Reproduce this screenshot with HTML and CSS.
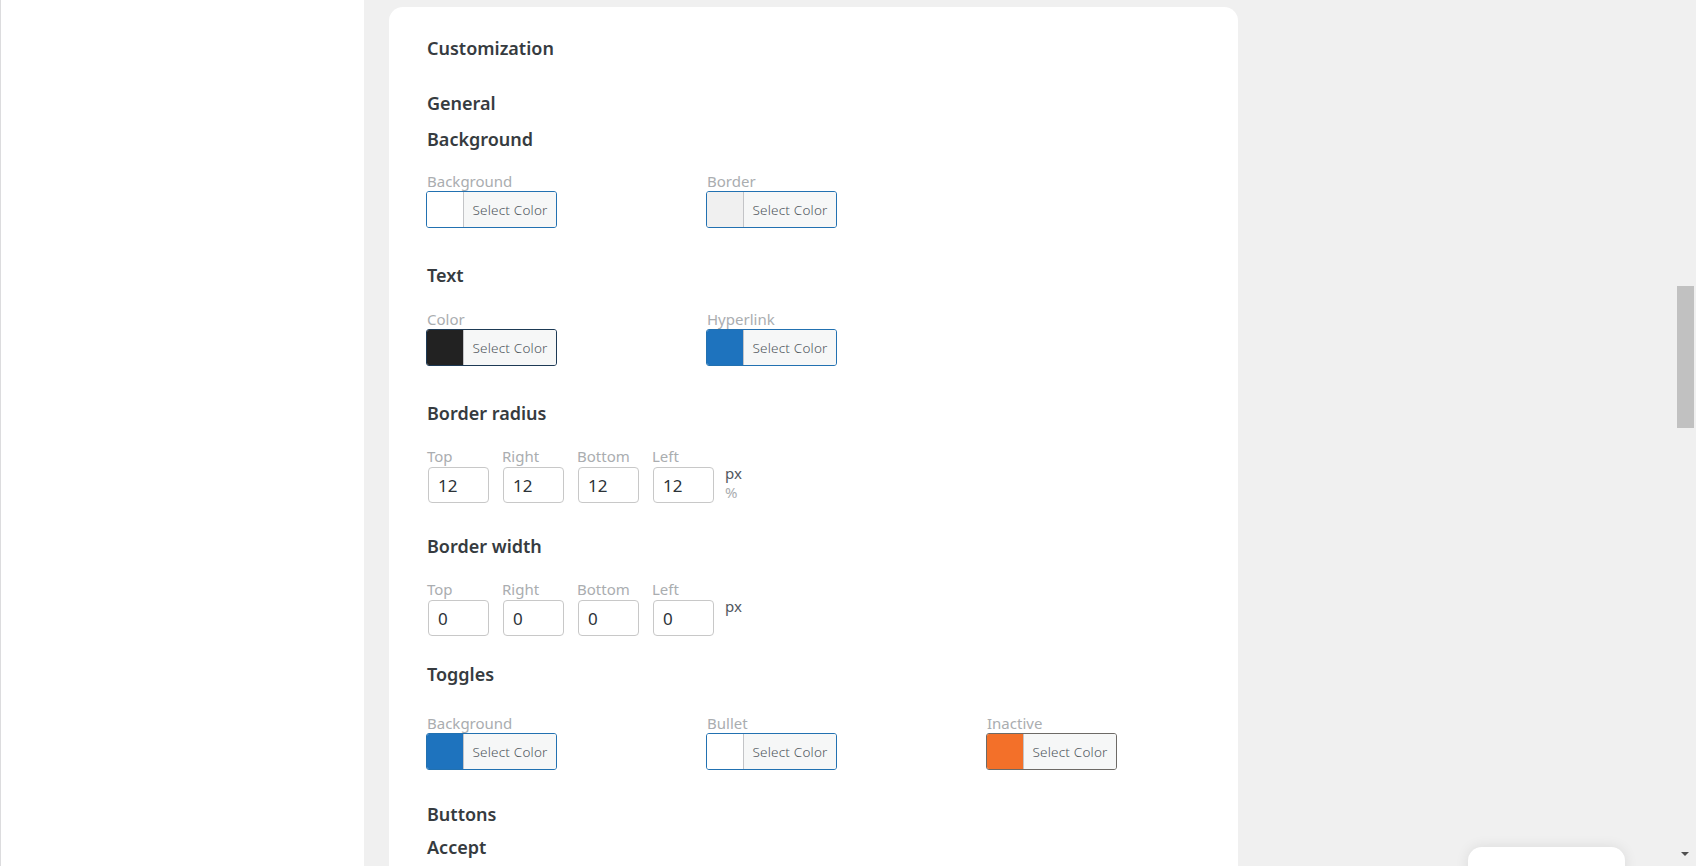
FILE: index.html
```html
<!DOCTYPE html>
<html lang="en">
<head>
<meta charset="utf-8">
<title>Customization</title>
<link rel="stylesheet" href="styles.css">
</head>
<body>
<div class="app">
  <aside class="sidebar"></aside>
  <main class="main">
    <section class="card">
      <h2 class="title">Customization</h2>

      <h3 class="heading heading--general">General</h3>
      <h4 class="heading heading--bg">Background</h4>
      <div class="picker-row picker-row--first">
        <div class="field">
          <span class="lbl">Background</span>
          <button class="picker"><span class="swatch swatch--white"></span><span class="pick-text">Select Color</span></button>
        </div>
        <div class="field">
          <span class="lbl">Border</span>
          <button class="picker"><span class="swatch swatch--light"></span><span class="pick-text">Select Color</span></button>
        </div>
      </div>

      <h4 class="heading heading--after-picker">Text</h4>
      <div class="picker-row">
        <div class="field">
          <span class="lbl">Color</span>
          <button class="picker picker--dark"><span class="swatch swatch--dark"></span><span class="pick-text">Select Color</span></button>
        </div>
        <div class="field">
          <span class="lbl">Hyperlink</span>
          <button class="picker"><span class="swatch swatch--blue"></span><span class="pick-text">Select Color</span></button>
        </div>
      </div>

      <h4 class="heading heading--after-picker">Border radius</h4>
      <div class="sides-row">
        <div class="side"><span class="lbl">Top</span><input class="num" type="text" value="12"></div>
        <div class="side"><span class="lbl">Right</span><input class="num" type="text" value="12"></div>
        <div class="side"><span class="lbl">Bottom</span><input class="num" type="text" value="12"></div>
        <div class="side"><span class="lbl">Left</span><input class="num" type="text" value="12"></div>
        <div class="units"><span class="unit unit--on">px</span><span class="unit">%</span></div>
      </div>

      <h4 class="heading heading--after-radius">Border width</h4>
      <div class="sides-row sides-row--width">
        <div class="side"><span class="lbl">Top</span><input class="num" type="text" value="0"></div>
        <div class="side"><span class="lbl">Right</span><input class="num" type="text" value="0"></div>
        <div class="side"><span class="lbl">Bottom</span><input class="num" type="text" value="0"></div>
        <div class="side"><span class="lbl">Left</span><input class="num" type="text" value="0"></div>
        <div class="units"><span class="unit unit--on">px</span></div>
      </div>

      <h4 class="heading heading--toggles">Toggles</h4>
      <div class="picker-row picker-row--toggles">
        <div class="field">
          <span class="lbl">Background</span>
          <button class="picker"><span class="swatch swatch--blue"></span><span class="pick-text">Select Color</span></button>
        </div>
        <div class="field">
          <span class="lbl">Bullet</span>
          <button class="picker"><span class="swatch swatch--white"></span><span class="pick-text">Select Color</span></button>
        </div>
        <div class="field">
          <span class="lbl">Inactive</span>
          <button class="picker picker--gray"><span class="swatch swatch--orange"></span><span class="pick-text">Select Color</span></button>
        </div>
      </div>

      <h3 class="heading heading--buttons">Buttons</h3>
      <h4 class="heading heading--accept">Accept</h4>
    </section>
  </main>
  <div class="scrollbar">
    <div class="thumb"></div>
    <div class="arrow-down"></div>
  </div>
</div>
<div class="float-box"></div>
</body>
</html>
```

FILE: styles.css
```css
* { box-sizing: border-box; }

html, body {
  margin: 0;
  padding: 0;
  height: 866px;
  overflow: hidden;
  background: #f0f0f0;
  font-family: "Noto Sans", "Open Sans", "Liberation Sans", sans-serif;
}

.app {
  display: grid;
  grid-template-columns: 364px 1fr 19px;
  height: 866px;
}

.sidebar {
  background: #ffffff;
  border-left: 1px solid #dcdcde;
}

.main {
  background: #f0f0f0;
  padding: 7px 0 0 25px;
  overflow: hidden;
}

.card {
  width: 849px;
  min-height: 900px;
  background: #ffffff;
  border-radius: 14px 14px 0 0;
  padding: 29px 0 0 38px;
}

.title,
.heading {
  margin: 0;
  font-size: 18px;
  line-height: 24px;
  font-weight: 600;
  color: #363b40;
}

.heading--general { margin-top: 31px; }
.heading--bg { margin-top: 12px; }
.heading--after-picker { margin-top: 35px; }
.heading--after-radius { margin-top: 31px; }
.heading--toggles { margin-top: 26px; }
.heading--buttons { margin-top: 32px; }
.heading--accept { margin-top: 9px; }

.lbl {
  display: block;
  font-size: 15px;
  line-height: 20px;
  color: #aaadb0;
}

.picker-row {
  display: grid;
  grid-template-columns: repeat(3, 280px);
  margin-top: 22px;
  margin-left: -1px;
}
.picker-row--first { margin-top: 20px; }
.picker-row--toggles { margin-top: 27px; }

.field .lbl { padding-left: 1px; }

.picker {
  display: flex;
  width: 131px;
  height: 37px;
  padding: 0;
  border: 1px solid #2271b1;
  border-radius: 3px;
  overflow: hidden;
  background: #f6f7f7;
  cursor: pointer;
  font-family: inherit;
}
.picker--dark { border-color: #1d3a55; }
.picker--gray { border-color: #6d6a66; }

.swatch {
  width: 37px;
  height: 100%;
  border-right: 1px solid #c3c4c7;
}
.swatch--white { background: #ffffff; }
.swatch--light { background: #f0f0f0; }
.swatch--dark { background: #222222; }
.swatch--blue { background: #1e73be; }
.swatch--orange { background: #f37029; }

.pick-text {
  flex: 1;
  display: flex;
  align-items: center;
  justify-content: center;
  font-size: 13.5px;
  font-weight: 300;
  letter-spacing: 0.2px;
  color: #50575e;
  background: #f6f7f7;
}

.sides-row {
  display: flex;
  gap: 14px;
  margin-top: 21px;
}

.side {
  display: flex;
  flex-direction: column;
  width: 61px;
}

.num {
  width: 61px;
  height: 36px;
  margin: 1px 0 0 1px;
  padding: 0 9px;
  border: 1px solid #c8c8c8;
  border-radius: 4px;
  background: #ffffff;
  font-family: inherit;
  font-size: 17px;
  color: #2c3338;
  outline: none;
}

.units {
  display: flex;
  flex-direction: column;
  padding-top: 18px;
  margin-left: -2px;
}

.unit {
  font-size: 15px;
  line-height: 19px;
  color: #aaadb0;
}
.unit--on { color: #50575e; }

.scrollbar {
  position: relative;
  background: #f0f0f0;
  display: flex;
  flex-direction: column;
  align-items: flex-start;
}

.thumb {
  width: 17px;
  height: 142px;
  margin-top: 286px;
  background: #c1c1c1;
}

.arrow-down {
  margin-top: auto;
  margin-bottom: 10px;
  margin-left: 4px;
  width: 0;
  height: 0;
  border-left: 4px solid transparent;
  border-right: 4px solid transparent;
  border-top: 4px solid #505050;
}

.float-box {
  position: fixed;
  left: 1468px;
  top: 847px;
  width: 157px;
  height: 40px;
  background: #ffffff;
  border-radius: 14px;
  box-shadow: 0 0 14px rgba(0, 0, 0, 0.09);
}
```
